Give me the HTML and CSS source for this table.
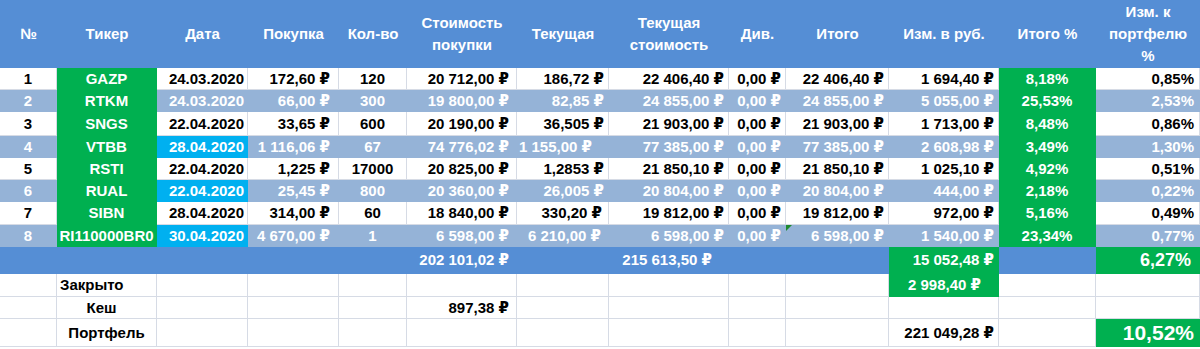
FILE: index.html
```html
<!DOCTYPE html>
<html lang="ru">
<head>
<meta charset="utf-8">
<title>Портфель</title>
<link rel="stylesheet" href="styles.css">
</head>
<body>
<table class="sheet">
  <colgroup>
    <col class="c57"><col class="c100"><col class="c91"><col class="c91"><col class="c68"><col class="c110"><col class="c92"><col class="c120"><col class="c57"><col class="c103"><col class="c110"><col class="c97"><col class="c104">
  </colgroup>
  <thead>
    <tr class="head">
      <th>№</th><th>Тикер</th><th>Дата</th><th>Покупка</th><th>Кол-во</th>
      <th>Стоимость<br>покупки</th><th>Текущая</th><th>Текущая<br>стоимость</th>
      <th>Див.</th><th>Итого</th><th>Изм. в руб.</th><th>Итого %</th><th>Изм. к<br>портфелю<br>%</th>
    </tr>
  </thead>
  <tbody>
    <tr class="w">
      <td class="ctr">1</td><td class="tk">GAZP</td><td class="dt">24.03.2020</td><td class="pr8">172,60 ₽</td><td class="ctr">120</td><td class="pr7">20 712,00 ₽</td><td>186,72 ₽</td><td>22 406,40 ₽</td><td>0,00 ₽</td><td>22 406,40 ₽</td><td>1 694,40 ₽</td><td class="pct">8,18%</td><td class="pr5">0,85%</td>
    </tr>
    <tr class="g">
      <td class="ctr">2</td><td class="tk">RTKM</td><td class="dt">24.03.2020</td><td class="pr8">66,00 ₽</td><td class="ctr">300</td><td class="pr7">19 800,00 ₽</td><td>82,85 ₽</td><td>24 855,00 ₽</td><td>0,00 ₽</td><td>24 855,00 ₽</td><td>5 055,00 ₽</td><td class="pct">25,53%</td><td class="pr5">2,53%</td>
    </tr>
    <tr class="w tall2">
      <td class="ctr">3</td><td class="tk">SNGS</td><td class="dt">22.04.2020</td><td class="pr8">33,65 ₽</td><td class="ctr">600</td><td class="pr7">20 190,00 ₽</td><td>36,505 ₽</td><td>21 903,00 ₽</td><td>0,00 ₽</td><td>21 903,00 ₽</td><td>1 713,00 ₽</td><td class="pct">8,48%</td><td class="pr5">0,86%</td>
    </tr>
    <tr class="g">
      <td class="ctr">4</td><td class="tk">VTBB</td><td class="dt cy">28.04.2020</td><td class="pr8">1 116,06 ₽</td><td class="ctr">67</td><td class="pr7">74 776,02 ₽</td><td class="pr16">1 155,00 ₽</td><td>77 385,00 ₽</td><td>0,00 ₽</td><td>77 385,00 ₽</td><td>2 608,98 ₽</td><td class="pct">3,49%</td><td class="pr5">1,30%</td>
    </tr>
    <tr class="w">
      <td class="ctr">5</td><td class="tk">RSTI</td><td class="dt">22.04.2020</td><td class="pr8">1,225 ₽</td><td class="ctr">17000</td><td class="pr7">20 825,00 ₽</td><td>1,2853 ₽</td><td>21 850,10 ₽</td><td>0,00 ₽</td><td>21 850,10 ₽</td><td>1 025,10 ₽</td><td class="pct">4,92%</td><td class="pr5">0,51%</td>
    </tr>
    <tr class="g">
      <td class="ctr">6</td><td class="tk">RUAL</td><td class="dt cy">22.04.2020</td><td class="pr8">25,45 ₽</td><td class="ctr">800</td><td class="pr7">20 360,00 ₽</td><td>26,005 ₽</td><td>20 804,00 ₽</td><td>0,00 ₽</td><td>20 804,00 ₽</td><td>444,00 ₽</td><td class="pct">2,18%</td><td class="pr5">0,22%</td>
    </tr>
    <tr class="w tall1">
      <td class="ctr">7</td><td class="tk">SIBN</td><td class="dt">28.04.2020</td><td class="pr8">314,00 ₽</td><td class="ctr">60</td><td class="pr7">18 840,00 ₽</td><td class="pr6">330,20 ₽</td><td>19 812,00 ₽</td><td>0,00 ₽</td><td>19 812,00 ₽</td><td>972,00 ₽</td><td class="pct">5,16%</td><td class="pr5">0,49%</td>
    </tr>
    <tr class="g">
      <td class="ctr">8</td><td class="tk">RI110000BR0</td><td class="dt cy">30.04.2020</td><td class="pr8">4 670,00 ₽</td><td class="ctr">1</td><td class="pr7">6 598,00 ₽</td><td class="pr7">6 210,00 ₽</td><td>6 598,00 ₽</td><td>0,00 ₽</td><td class="flag">6 598,00 ₽</td><td>1 540,00 ₽</td><td class="pct">23,34%</td><td class="pr5">0,77%</td>
    </tr>
    <tr class="total">
      <td></td><td></td><td></td><td></td><td></td><td class="pr7">202 101,02 ₽</td><td></td><td class="pr16">215 613,50 ₽</td><td></td><td></td><td class="grn">15 052,48 ₽</td><td></td><td class="grn big1">6,27%</td>
    </tr>
    <tr class="w closed">
      <td></td><td class="lbl-left">Закрыто</td><td></td><td></td><td></td><td></td><td></td><td></td><td></td><td></td><td class="grn pr17">2 998,40 ₽</td><td></td><td></td>
    </tr>
    <tr class="w">
      <td></td><td class="lbl-cash">Кеш</td><td></td><td></td><td></td><td class="pr7">897,38 ₽</td><td></td><td></td><td></td><td></td><td></td><td></td><td></td>
    </tr>
    <tr class="w port">
      <td></td><td class="ctr">Портфель</td><td></td><td></td><td></td><td></td><td></td><td></td><td></td><td></td><td>221 049,28 ₽</td><td></td><td class="grn big2">10,52%</td>
    </tr>
  </tbody>
</table>
</body>
</html>
```

FILE: styles.css
```css
html, body {
  margin: 0;
  padding: 0;
  background: #ffffff;
}

body {
  font-family: "Liberation Sans", Arial, "DejaVu Sans", sans-serif;
  font-weight: bold;
  font-size: 15px;
  color: #000;
}

.sheet {
  width: 1200px;
  table-layout: fixed;
  border-collapse: separate;
  border-spacing: 0;
}

.c57 { width: 57px; }
.c100 { width: 100px; }
.c91 { width: 91px; }
.c68 { width: 68px; }
.c110 { width: 110px; }
.c92 { width: 92px; }
.c120 { width: 120px; }
.c103 { width: 103px; }
.c97 { width: 97px; }
.c104 { width: 104px; }

.head th {
  background: #558ed5;
  color: #fff;
  height: 68px;
  padding: 0;
  border: 0;
  font-weight: bold;
  line-height: 22px;
  text-align: center;
  vertical-align: middle;
}

td {
  padding: 0 4px 0 0;
  line-height: 21px;
  text-align: right;
  white-space: nowrap;
  overflow: visible;
  border-right: 1px solid #d6dbe5;
  border-bottom: 1px solid #d6dbe5;
  vertical-align: middle;
}

.tall1 td { line-height: 22px; }
.tall2 td { line-height: 23px; }

.w td { background: #ffffff; color: #000; }
.g td { background: #95b3d7; color: #fff; border-color: #95b3d7; }

.ctr { text-align: center; padding-right: 0; }
.dt { padding-right: 3px; }
.pr5 { padding-right: 5px; }
.pr6 { padding-right: 6px; }
.pr7 { padding-right: 7px; }
.pr8 { padding-right: 8px; }
.pr16 { padding-right: 16px; }
.pr17 { padding-right: 17px; }

.w td.tk, .g td.tk,
.w td.pct, .g td.pct {
  background: #00b050;
  color: #fff;
  border-color: #00b050;
  text-align: center;
  padding-right: 0;
}

.g td.cy {
  background: #00b0f0;
  border-color: #00b0f0;
  color: #fff;
}

.g td.flag { position: relative; }
.g td.flag::before {
  content: "";
  position: absolute;
  left: 0;
  top: 0;
  width: 0;
  height: 0;
  border-top: 6px solid #1f8a2e;
  border-right: 6px solid transparent;
}

.total td {
  background: #558ed5;
  color: #fff;
  border-color: #558ed5;
  line-height: 26px;
}

.w td.grn, .total td.grn {
  background: #00b050;
  color: #fff;
  border-color: #00b050;
}

.closed td { line-height: 22px; }
.port td { line-height: 27px; }

.big1 { font-size: 18px; padding-right: 8px; }
.big2 { font-size: 21px; padding-right: 5px; }

.lbl-left { text-align: left; padding: 0 0 0 3px; }
.lbl-cash { text-align: center; padding: 0 10px 0 0; }
```
